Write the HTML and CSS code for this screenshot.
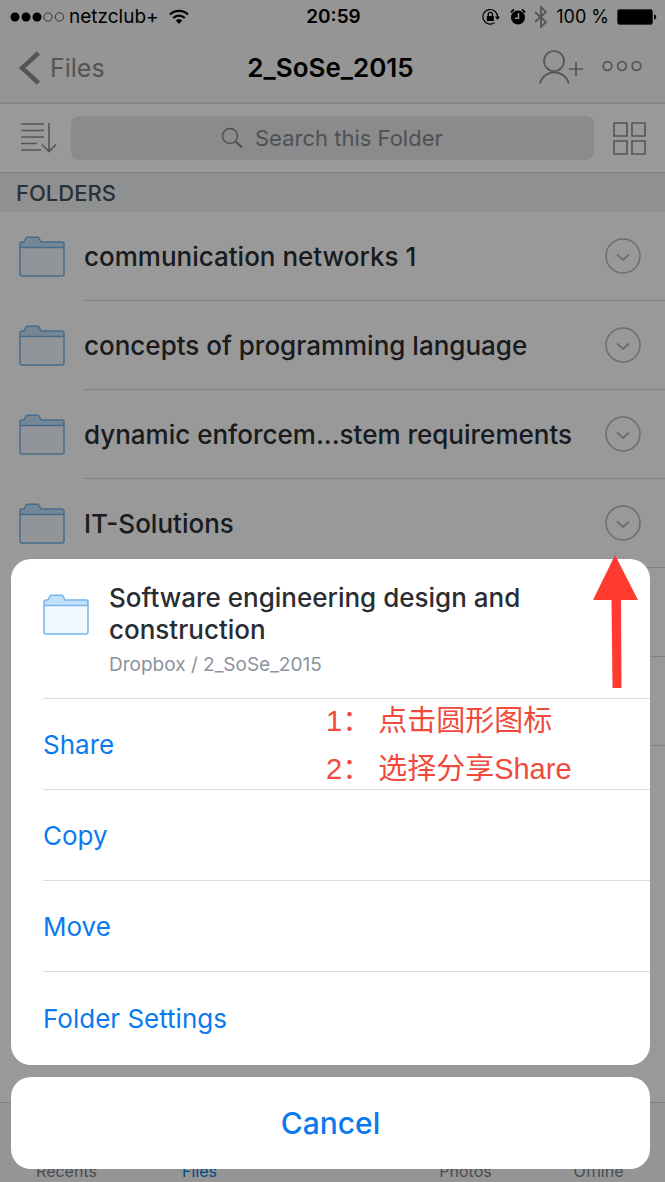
FILE: index.html
```html
<!DOCTYPE html>
<html lang="en">
<head>
<meta charset="utf-8">
<meta name="viewport" content="width=device-width, initial-scale=1">
<title>2_SoSe_2015</title>
<link rel="stylesheet" href="styles.css">
</head>
<body>
<svg class="defs" aria-hidden="true">
  <symbol id="folder" viewBox="0 0 46 42">
    <path d="M1 38V8a2 2 0 0 1 2-2h2l2-4a1.500 1.500 0 0 1 1.400-.8h10.200a1.500 1.500 0 0 1 1.400.8l2 4h21a2 2 0 0 1 2 2v30a2 2 0 0 1-2 2H3a2 2 0 0 1-2-2z" fill="#f2f8ff"/>
    <path d="M1 11.500V8a2 2 0 0 1 2-2h2l2-4a1.500 1.500 0 0 1 1.400-.8h10.200a1.500 1.500 0 0 1 1.400.8l2 4h21a2 2 0 0 1 2 2v3.500z" fill="#c3e0fa"/>
    <path d="M1 38V8a2 2 0 0 1 2-2h2l2-4a1.500 1.500 0 0 1 1.400-.8h10.200a1.500 1.500 0 0 1 1.400.8l2 4h21a2 2 0 0 1 2 2v30a2 2 0 0 1-2 2H3a2 2 0 0 1-2-2zM1 11.500h44" fill="none" stroke="#77b4e8" stroke-width="1.500"/>
  </symbol>
  <symbol id="more" viewBox="0 0 36 36">
    <g fill="none" stroke="#b4b6bb"><circle cx="18" cy="18" r="17" stroke-width="1.500"/><path d="M12 16.500l6 5.500 6-5.500" stroke-width="1.800"/></g>
  </symbol>
</svg>
<div class="app">
  <header class="top">
    <div class="status">
      <div class="status-left">
        <svg width="54" height="12" viewBox="0 0 54 12"><g><circle cx="5" cy="6" r="4.500"/><circle cx="16" cy="6" r="4.500"/><circle cx="27" cy="6" r="4.500"/></g><g fill="none" stroke="#333" stroke-width=".8"><circle cx="38" cy="6" r="4.200"/><circle cx="49.500" cy="6" r="4.200"/></g></svg>
        <span class="carrier">netzclub+</span>
        <svg width="20" height="16" viewBox="0 0 20 16"><g fill="none" stroke="#000" stroke-width="2.200"><path d="M1 5.500a13 13 0 0 1 18 0"/><path d="M4.200 9a8.400 8.400 0 0 1 11.600 0"/></g><path d="M6.700 11.500a4.800 4.800 0 0 1 6.600 0L10 15z"/></svg>
      </div>
      <time class="clock">20:59</time>
      <div class="status-right">
        <svg width="20" height="18" viewBox="0 0 20 18"><path d="M15.500 9.500a7.300 7.300 0 1 0-2.800 5.100" fill="none" stroke="#000" stroke-width="1.200"/><path d="M13 8.500h5L15.500 12z"/><rect x="4.800" y="8" width="7" height="5"/><path d="M6.200 8V6.500a2.100 2.100 0 0 1 4.200 0V8" fill="none" stroke="#000" stroke-width="1.300"/></svg>
        <svg width="16" height="18" viewBox="0 0 16 18"><circle cx="8" cy="9.500" r="7"/><path d="M1 4.500a8 8 0 0 1 3-3M15 4.500a8 8 0 0 0-3-3" fill="none" stroke="#000" stroke-width="1.800"/><path d="M8.500 5v5.200H4.800" fill="none" stroke="#f8f8f8" stroke-width="1.500"/></svg>
        <svg width="14" height="22" viewBox="0 0 14 22"><path d="M1 6l11 10-5 5V1l5 5L1 16" fill="none" stroke="#8f8f8f" stroke-width="1.800"/></svg>
        <span class="percent">100 %</span>
        <svg width="40" height="16" viewBox="0 0 40 16"><rect x=".5" y=".5" width="35" height="15" rx="2" stroke="#555"/><path d="M37 5.500c3 .5 3 4.500 0 5z"/></svg>
      </div>
    </div>
    <nav class="navbar">
      <a class="back" href="#"><svg width="22" height="34" viewBox="0 0 22 34"><path d="M19.500 2L3 17l16.500 15" fill="none" stroke="#8e8e8e" stroke-width="4.500"/></svg>Files</a>
      <h1 class="title">2_SoSe_2015</h1>
      <div class="actions">
        <button class="icon-button" aria-label="Add person"><svg width="46" height="36" viewBox="0 0 46 36"><g fill="none" stroke="#8e8e8e" stroke-width="1.700"><circle cx="15" cy="11" r="10"/><path d="M.8 33.500a15 15 0 0 1 29 0M30 19h14M37 12v14"/></g></svg></button>
        <button class="icon-button" aria-label="More"><svg width="40" height="16" viewBox="0 0 40 16"><g fill="none" stroke="#8e8e8e" stroke-width="1.800"><circle cx="5.500" cy="6" r="4.300"/><circle cx="20" cy="6" r="4.300"/><circle cx="34.500" cy="6" r="4.300"/></g></svg></button>
      </div>
    </nav>
  </header>
  <div class="toolbar">
    <button class="icon-button" aria-label="Sort"><svg width="37" height="32" viewBox="0 0 37 32"><path d="M1 2h23M1 8.500h23M1 15h23M1 21.500h16M1 28h20M29 1v28.500M22 22.500l7 7 7-7" fill="none" stroke="#8e8e8e" stroke-width="1.600"/></svg></button>
    <label class="search">
      <svg width="22" height="22" viewBox="0 0 22 22"><g fill="none" stroke="#85878b"><circle cx="9" cy="9" r="7.500" stroke-width="1.500"/><path d="M14.500 14.500l6.500 6" stroke-width="2.200"/></g></svg>
      <input class="search-input" type="search" placeholder="Search this Folder" aria-label="Search this Folder">
    </label>
    <button class="icon-button" aria-label="Grid view"><svg width="33" height="33" viewBox="0 0 33 33"><path d="M1 1h13v13H1zM19 1h13v13H19zM1 19h13v13H1zM19 19h13v13H19z" fill="none" stroke="#8e8e8e" stroke-width="1.600"/></svg></button>
  </div>
  <h2 class="section">FOLDERS</h2>
  <ul class="folders">
    <li class="row"><svg class="folder"><use href="#folder"/></svg><div class="row-body"><span class="name">communication networks 1</span><button class="icon-button" aria-label="Options"><svg class="more"><use href="#more"/></svg></button></div></li>
    <li class="row"><svg class="folder"><use href="#folder"/></svg><div class="row-body"><span class="name">concepts of programming language</span><button class="icon-button" aria-label="Options"><svg class="more"><use href="#more"/></svg></button></div></li>
    <li class="row"><svg class="folder"><use href="#folder"/></svg><div class="row-body"><span class="name">dynamic enforcem...stem requirements</span><button class="icon-button" aria-label="Options"><svg class="more"><use href="#more"/></svg></button></div></li>
    <li class="row"><svg class="folder"><use href="#folder"/></svg><div class="row-body"><span class="name">IT-Solutions</span><button class="icon-button" aria-label="Options"><svg class="more"><use href="#more"/></svg></button></div></li>
    <li class="row"><div class="row-body"></div></li>
    <li class="row"><div class="row-body"></div></li>
  </ul>
  <nav class="tabs">
    <a class="tab" href="#">Recents</a>
    <a class="tab tab-active" href="#">Files</a>
    <span class="tab"></span>
    <a class="tab" href="#">Photos</a>
    <a class="tab" href="#">Offline</a>
  </nav>
  <div class="scrim"></div>
  <div class="sheet" role="dialog" aria-label="Folder actions">
    <div class="card">
      <div class="card-header">
        <svg class="folder"><use href="#folder"/></svg>
        <div class="card-text">
          <h2 class="card-title">Software engineering design and construction</h2>
          <p class="card-path">Dropbox / 2_SoSe_2015</p>
        </div>
      </div>
      <button class="action">Share</button>
      <button class="action">Copy</button>
      <button class="action">Move</button>
      <button class="action">Folder Settings</button>
    </div>
    <button class="cancel">Cancel</button>
    <ol class="notes">
      <li class="note"><span>1：</span><span>点击圆形图标</span></li>
      <li class="note"><span>2：</span><span>选择分享Share</span></li>
    </ol>
    <svg class="arrow" width="46" height="134" viewBox="0 0 46 134"><path d="M22 0l23 45H28l.5 88h-9L18.500 45H0z" fill="#ff3b30"/></svg>
  </div>
</div>
</body>
</html>
```
FILE: styles.css
```css
* { box-sizing: border-box; }

body {
  margin: 0;
  font-family: Inter, "Noto Sans CJK SC", sans-serif;
  color: #2a2d32;
}

h1, h2, p, ul, ol { margin: 0; padding: 0; }
ul, ol { list-style: none; }
svg { display: block; flex: none; }
a { color: inherit; text-decoration: none; }
button, input { font: inherit; border: 0; background: none; padding: 0; }

.defs { position: absolute; width: 0; height: 0; }

.app {
  position: relative;
  min-height: 100vh;
  display: flex;
  flex-direction: column;
  overflow: hidden;
  background: #fff;
}

.top {
  background: #f8f8f8;
  border-bottom: 2px solid #e2e2e3;
}

.status {
  display: grid;
  grid-template-columns: 1fr auto 1fr;
  align-items: center;
  height: 33px;
  padding: 0 8px 0 10px;
  font-size: 19px;
  color: #000;
}
.status-left, .status-right { display: flex; align-items: center; }
.status-left { gap: 5px; }
.carrier { margin-right: 5px; }
.status-right { justify-content: flex-end; gap: 8px; }
.percent { font-size: 18px; }
.clock { font-weight: 600; font-size: 19px; }

.navbar {
  display: grid;
  grid-template-columns: 1fr auto 1fr;
  align-items: center;
  height: 69px;
  padding: 0 23px 0 19px;
}
.back {
  display: flex;
  align-items: center;
  gap: 9px;
  font-size: 25px;
  color: #8e8e8e;
}
.title { font-size: 26px; font-weight: 600; color: #000; }
.actions { display: flex; align-items: center; justify-content: flex-end; gap: 17px; }

.toolbar {
  display: flex;
  align-items: center;
  height: 69px;
  padding: 0 19px 0 20px;
  gap: 14px;
  border-bottom: 1px solid #d0d2d5;
}
.search {
  flex: 1;
  display: flex;
  align-items: center;
  justify-content: center;
  gap: 12px;
  height: 44px;
  margin-right: 5px;
  border-radius: 8px;
  background: #e6e8eb;
}
.search-input { width: 189px; font-size: 22px; appearance: none; }
.search-input::-webkit-search-cancel-button { display: none; }
.search-input::placeholder { color: #85878b; opacity: 1; }

.section {
  height: 39px;
  padding-left: 16px;
  background: #eff1f4;
  font-size: 22px;
  line-height: 40px;
  font-weight: 500;
  color: #4a5057;
}

.row {
  display: flex;
  align-items: center;
  height: 89px;
  padding-left: 19px;
}
.folder { width: 46px; height: 42px; }
.row-body {
  flex: 1;
  display: flex;
  align-items: center;
  justify-content: space-between;
  height: 89px;
  margin-left: 19px;
  padding-right: 24px;
  border-bottom: 1px solid #d9dbde;
}
.row-body:only-child { margin-left: 65px; }
.name { font-size: 26px; font-weight: 500; white-space: nowrap; }
.more { width: 36px; height: 36px; }

.tabs {
  display: flex;
  align-items: flex-end;
  height: 80px;
  margin-top: auto;
  padding-bottom: 1px;
  border-top: 1px solid #d0d2d5;
  background: #f8f8f8;
}
.tab { flex: 1; text-align: center; font-size: 16px; line-height: 20px; color: #7b8088; }
.tab-active { color: #007ee5; }

.scrim { position: absolute; inset: 0; background: rgba(0, 0, 0, 0.4); }

.sheet {
  position: absolute;
  left: 11px;
  right: 15px;
  bottom: 13px;
  display: flex;
  flex-direction: column;
  gap: 12px;
}
.card, .cancel { border-radius: 20px; background: #fff; }
.card { padding-left: 32px; }
.card-header {
  display: flex;
  gap: 20px;
  height: 140px;
  padding-top: 23px;
  border-bottom: 1px solid #dcdde0;
}
.card-header .folder { margin-top: 12px; }
.card-text { max-width: 440px; }
.card-title { font-size: 26px; line-height: 32px; font-weight: 500; }
.card-path { margin-top: 7px; font-size: 19px; line-height: 24px; color: #8b939d; }
.action {
  display: block;
  width: 100%;
  height: 91px;
  text-align: left;
  font-size: 26px;
  color: #0b7aed;
  border-bottom: 1px solid #dcdde0;
}
.action:last-child { height: 93px; border-bottom: 0; }
.cancel { height: 92px; font-size: 30px; font-weight: 500; color: #0b7aed; }

.notes {
  position: absolute;
  top: 138px;
  left: 315px;
  font-family: "Liberation Sans", "Noto Sans CJK SC", sans-serif;
  font-size: 29px;
  line-height: 48px;
  color: #f04a3c;
}
.note { display: flex; gap: 7px; }
.arrow { position: absolute; top: -4px; right: 11px; }
```
